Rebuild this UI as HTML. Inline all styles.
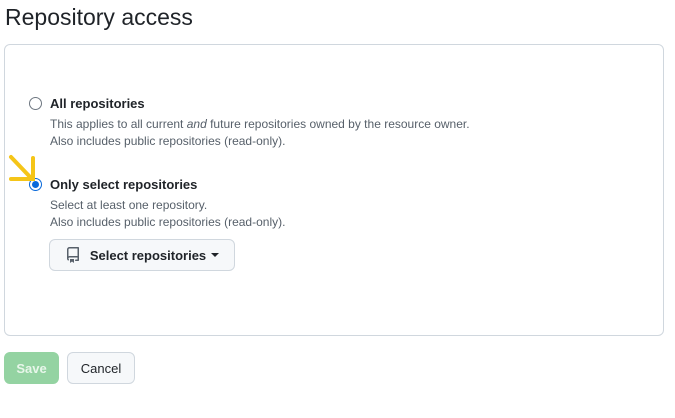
<!DOCTYPE html>
<html><head><meta charset="utf-8"><style>
body{margin:0;width:675px;height:418px;background:#fff;font-family:"Liberation Sans",sans-serif;color:#1f2328;position:relative;overflow:hidden}
.t{position:absolute;left:5px;top:4px;font-size:23px;font-weight:400}
.box{position:absolute;left:4px;top:44px;width:658px;height:290px;border:1px solid #d0d7de;border-radius:6px}
.r{position:absolute;width:11px;height:11px;border:1px solid #6e7781;border-radius:50%;background:#fff}
.r.on{border:1px solid #0969da;width:11px;height:11px}
.r.on::after{content:"";position:absolute;left:2px;top:2px;width:7px;height:7px;border-radius:50%;background:#0969da}
.l{position:absolute;left:50px;font-size:13px;font-weight:700}
.d{position:absolute;left:50px;font-size:12px;color:#57606a;line-height:17px}
.btn{position:absolute;border:1px solid #d0d7de;border-radius:6px;background:#f6f8fa;font-size:13px;font-weight:700;box-sizing:border-box;display:flex;align-items:center;justify-content:center}
</style></head><body>
<div class="t">Repository access</div>
<div class="box"></div>
<div class="r" style="left:29px;top:97px"></div>
<div class="l" style="top:96px">All repositories</div>
<div class="d" style="top:116px">This applies to all current <i>and</i> future repositories owned by the resource owner.<br>Also includes public repositories (read-only).</div>
<div class="r on" style="left:29px;top:178px"></div>
<div class="l" style="top:177px">Only select repositories</div>
<div class="d" style="top:197px">Select at least one repository.<br>Also includes public repositories (read-only).</div>
<div class="btn" style="left:49px;top:239px;width:186px;height:32px">
<svg width="16" height="16" viewBox="0 0 16 16" style="margin-right:9px"><path fill="#57606a" d="M2 2.5A2.5 2.5 0 0 1 4.5 0h8.75a.75.75 0 0 1 .75.75v12.5a.75.75 0 0 1-.75.75h-2.5a.75.75 0 0 1 0-1.5h1.75v-2h-8a1 1 0 0 0-.714 1.700.75.75 0 1 1-1.072 1.050A2.495 2.495 0 0 1 2 11.5Zm10.5-1h-8a1 1 0 0 0-1 1v6.708A2.486 2.486 0 0 1 4.5 9h8ZM5 12.25a.25.25 0 0 1 .25-.25h3.5a.25.25 0 0 1 .25.25v3.25a.25.25 0 0 1-.4.2l-1.45-1.087a.249.249 0 0 0-.3 0L5.4 15.7a.25.25 0 0 1-.4-.2Z"/></svg>
Select repositories <span style="display:inline-block;margin-left:5px;border-left:4px solid transparent;border-right:4px solid transparent;border-top:4px solid #1f2328"></span></div>
<svg style="position:absolute;left:0;top:145px" width="45" height="45"><g stroke="#f5c518" stroke-width="4" stroke-linecap="round" fill="none"><path d="M11 12 L32 34"/><path d="M33 13 L33 34 L11 34"/></g></svg>
<div class="btn" style="left:4px;top:352px;width:55px;height:32px;background:#94d3a2;border-color:#94d3a2;color:#e8f6ea">Save</div>
<div class="btn" style="left:67px;top:352px;width:68px;height:32px;font-weight:400;color:#1f2328">Cancel</div>
</body></html>
